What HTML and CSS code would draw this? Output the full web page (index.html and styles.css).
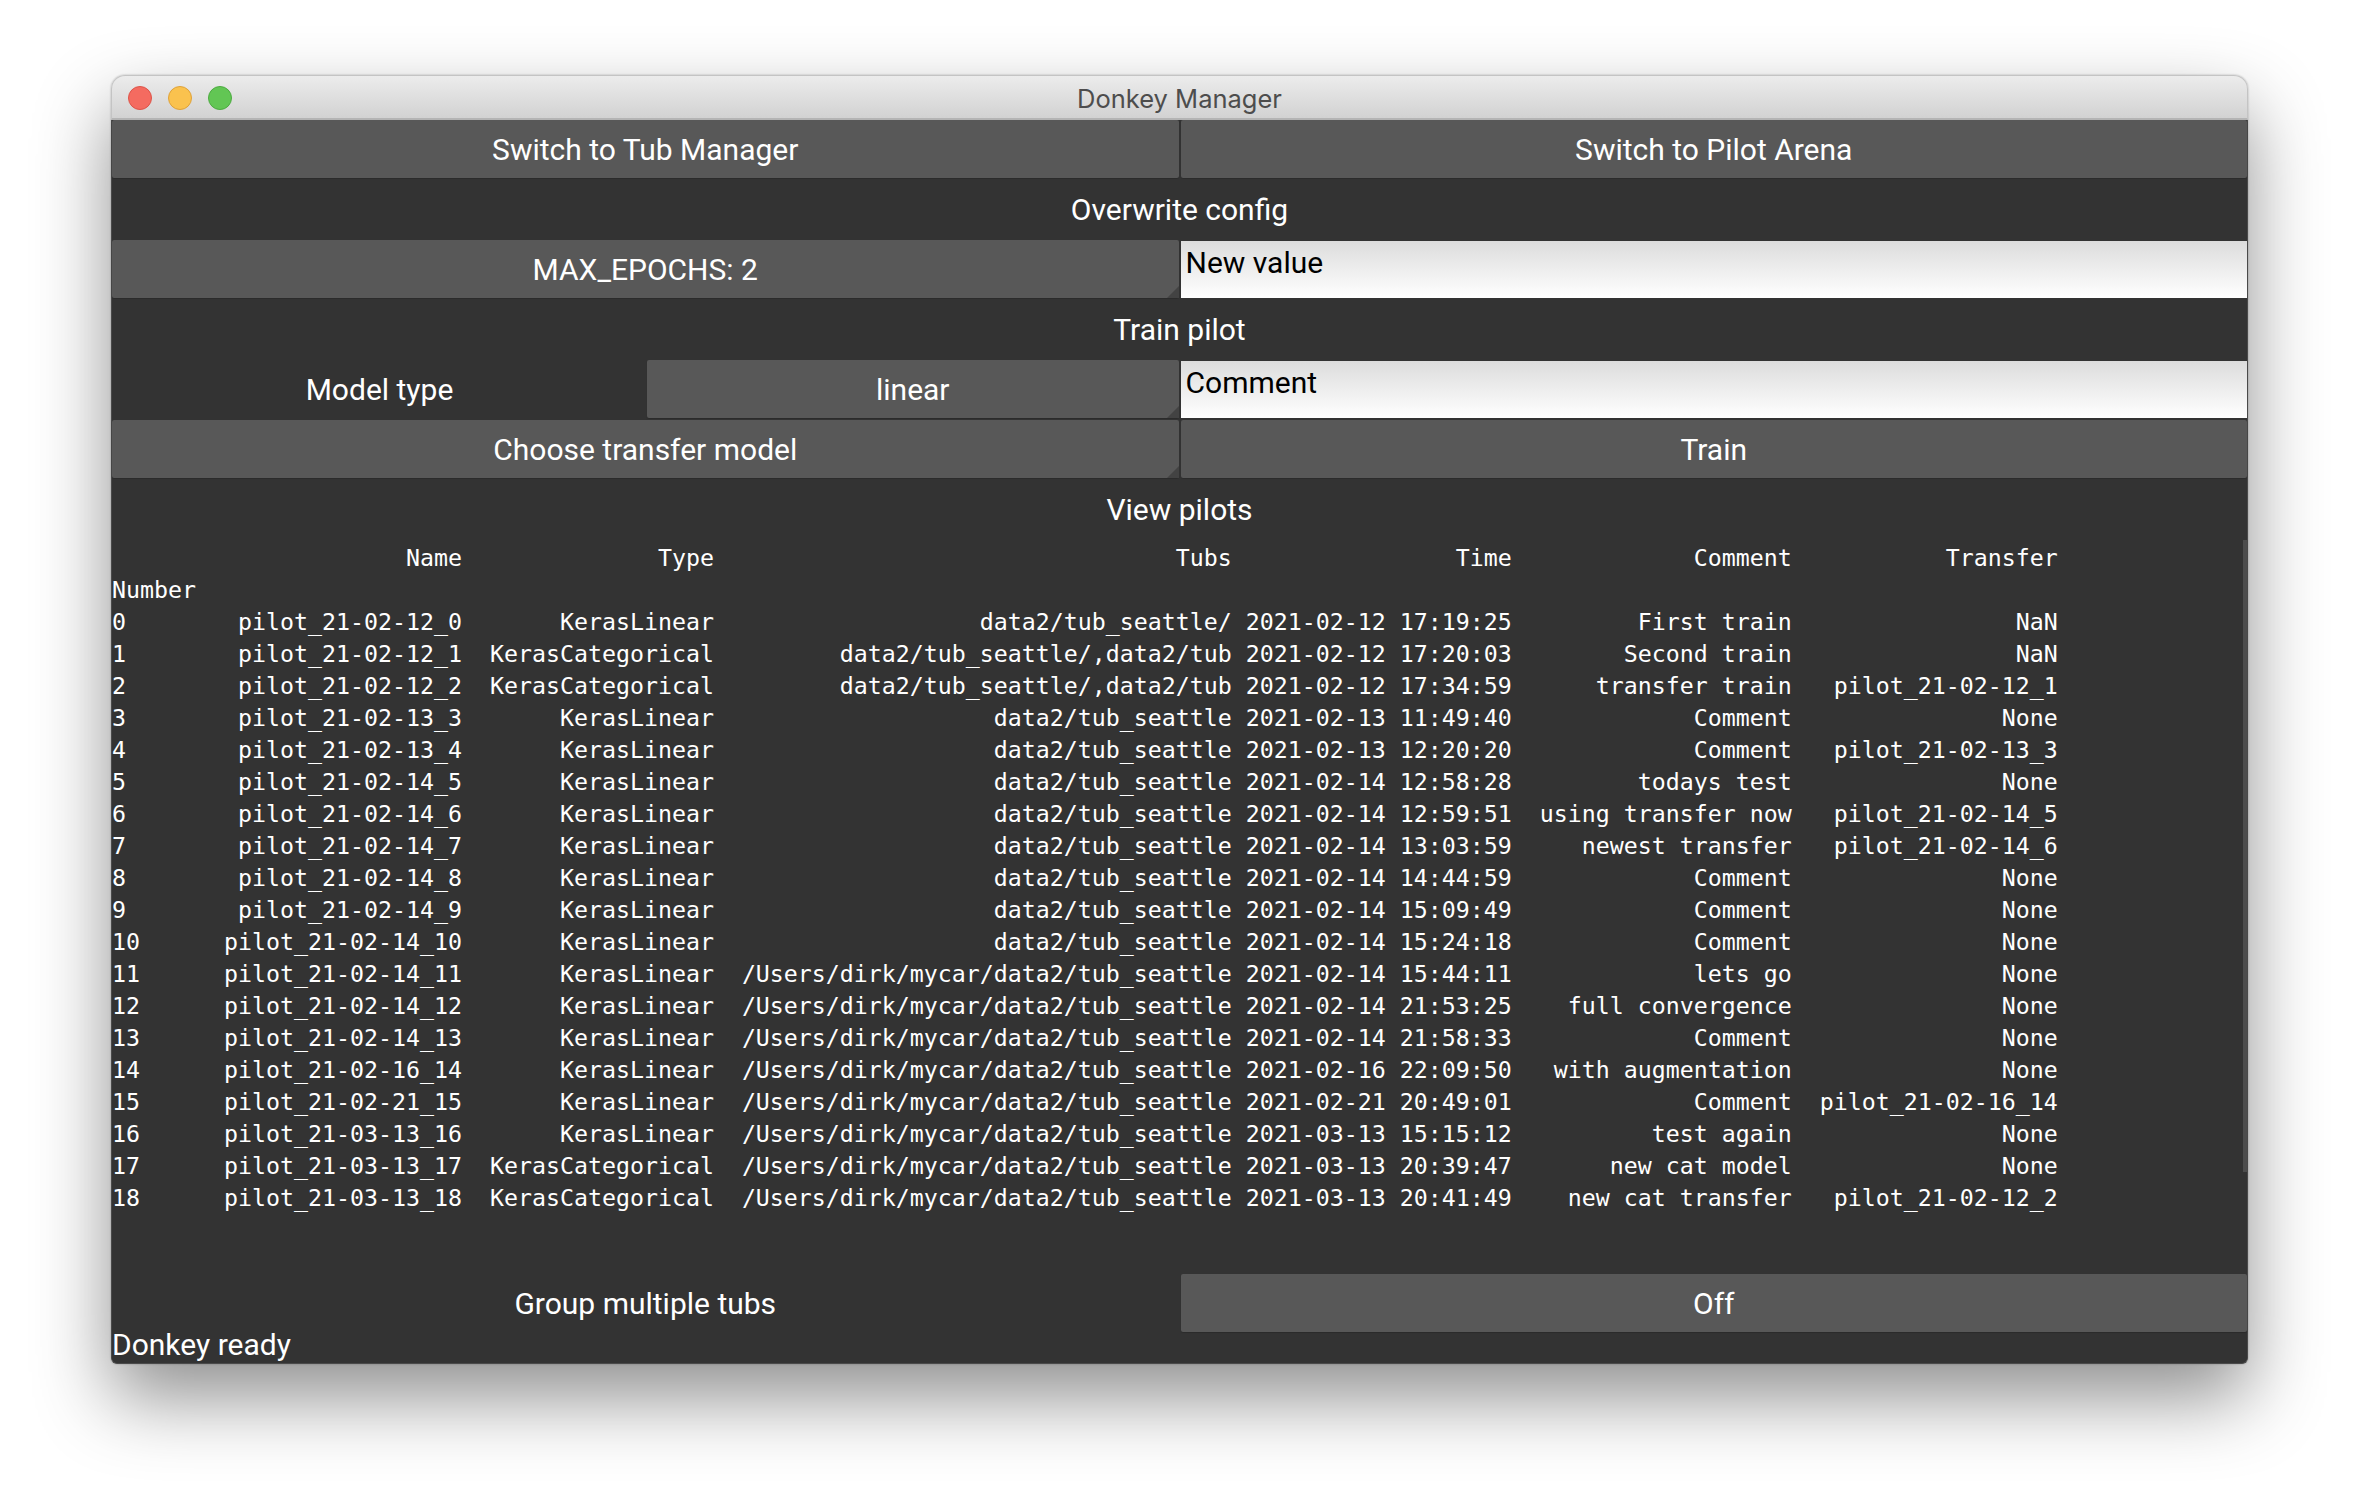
FILE: index.html
```html
<!DOCTYPE html>
<html lang="en">
<head>
  <meta charset="UTF-8">
  <meta name="viewport" content="width=device-width, initial-scale=1.0">
  <title>Donkey Manager</title>
  <link rel="stylesheet" href="styles.css">
</head>
<body>

<div class="window">
  <div class="titlebar">
    <div class="lights">
      <span class="light red"></span>
      <span class="light yellow"></span>
      <span class="light green"></span>
    </div>
    <div class="title">Donkey Manager</div>
  </div>

  <div class="content">
    <div class="row">
      <button class="btn">Switch to Tub Manager</button>
      <button class="btn">Switch to Pilot Arena</button>
    </div>
    <div class="row label">Overwrite config</div>
    <div class="row">
      <button class="btn spinner">MAX_EPOCHS: 2</button>
      <div class="input">New value</div>
    </div>
    <div class="row label">Train pilot</div>
    <div class="row">
      <div class="half">
        <div class="label">Model type</div>
        <button class="btn spinner">linear</button>
      </div>
      <div class="input">Comment</div>
    </div>
    <div class="row">
      <button class="btn spinner">Choose transfer model</button>
      <button class="btn">Train</button>
    </div>
    <div class="row label">View pilots</div>

    <div class="pilots">
      <table class="pilot-table">
        <colgroup>
          <col class="c-num"><col class="c-name"><col class="c-type"><col class="c-tubs"><col class="c-time"><col class="c-comment"><col class="c-transfer">
        </colgroup>
        <tr><td></td><td>Name</td><td>Type</td><td>Tubs</td><td>Time</td><td>Comment</td><td>Transfer</td></tr>
        <tr><td>Number</td><td></td><td></td><td></td><td></td><td></td><td></td></tr>
        <tr><td>0</td><td>pilot_21-02-12_0</td><td>KerasLinear</td><td>data2/tub_seattle/</td><td>2021-02-12 17:19:25</td><td>First train</td><td>NaN</td></tr>
        <tr><td>1</td><td>pilot_21-02-12_1</td><td>KerasCategorical</td><td>data2/tub_seattle/,data2/tub</td><td>2021-02-12 17:20:03</td><td>Second train</td><td>NaN</td></tr>
        <tr><td>2</td><td>pilot_21-02-12_2</td><td>KerasCategorical</td><td>data2/tub_seattle/,data2/tub</td><td>2021-02-12 17:34:59</td><td>transfer train</td><td>pilot_21-02-12_1</td></tr>
        <tr><td>3</td><td>pilot_21-02-13_3</td><td>KerasLinear</td><td>data2/tub_seattle</td><td>2021-02-13 11:49:40</td><td>Comment</td><td>None</td></tr>
        <tr><td>4</td><td>pilot_21-02-13_4</td><td>KerasLinear</td><td>data2/tub_seattle</td><td>2021-02-13 12:20:20</td><td>Comment</td><td>pilot_21-02-13_3</td></tr>
        <tr><td>5</td><td>pilot_21-02-14_5</td><td>KerasLinear</td><td>data2/tub_seattle</td><td>2021-02-14 12:58:28</td><td>todays test</td><td>None</td></tr>
        <tr><td>6</td><td>pilot_21-02-14_6</td><td>KerasLinear</td><td>data2/tub_seattle</td><td>2021-02-14 12:59:51</td><td>using transfer now</td><td>pilot_21-02-14_5</td></tr>
        <tr><td>7</td><td>pilot_21-02-14_7</td><td>KerasLinear</td><td>data2/tub_seattle</td><td>2021-02-14 13:03:59</td><td>newest transfer</td><td>pilot_21-02-14_6</td></tr>
        <tr><td>8</td><td>pilot_21-02-14_8</td><td>KerasLinear</td><td>data2/tub_seattle</td><td>2021-02-14 14:44:59</td><td>Comment</td><td>None</td></tr>
        <tr><td>9</td><td>pilot_21-02-14_9</td><td>KerasLinear</td><td>data2/tub_seattle</td><td>2021-02-14 15:09:49</td><td>Comment</td><td>None</td></tr>
        <tr><td>10</td><td>pilot_21-02-14_10</td><td>KerasLinear</td><td>data2/tub_seattle</td><td>2021-02-14 15:24:18</td><td>Comment</td><td>None</td></tr>
        <tr><td>11</td><td>pilot_21-02-14_11</td><td>KerasLinear</td><td>/Users/dirk/mycar/data2/tub_seattle</td><td>2021-02-14 15:44:11</td><td>lets go</td><td>None</td></tr>
        <tr><td>12</td><td>pilot_21-02-14_12</td><td>KerasLinear</td><td>/Users/dirk/mycar/data2/tub_seattle</td><td>2021-02-14 21:53:25</td><td>full convergence</td><td>None</td></tr>
        <tr><td>13</td><td>pilot_21-02-14_13</td><td>KerasLinear</td><td>/Users/dirk/mycar/data2/tub_seattle</td><td>2021-02-14 21:58:33</td><td>Comment</td><td>None</td></tr>
        <tr><td>14</td><td>pilot_21-02-16_14</td><td>KerasLinear</td><td>/Users/dirk/mycar/data2/tub_seattle</td><td>2021-02-16 22:09:50</td><td>with augmentation</td><td>None</td></tr>
        <tr><td>15</td><td>pilot_21-02-21_15</td><td>KerasLinear</td><td>/Users/dirk/mycar/data2/tub_seattle</td><td>2021-02-21 20:49:01</td><td>Comment</td><td>pilot_21-02-16_14</td></tr>
        <tr><td>16</td><td>pilot_21-03-13_16</td><td>KerasLinear</td><td>/Users/dirk/mycar/data2/tub_seattle</td><td>2021-03-13 15:15:12</td><td>test again</td><td>None</td></tr>
        <tr><td>17</td><td>pilot_21-03-13_17</td><td>KerasCategorical</td><td>/Users/dirk/mycar/data2/tub_seattle</td><td>2021-03-13 20:39:47</td><td>new cat model</td><td>None</td></tr>
        <tr><td>18</td><td>pilot_21-03-13_18</td><td>KerasCategorical</td><td>/Users/dirk/mycar/data2/tub_seattle</td><td>2021-03-13 20:41:49</td><td>new cat transfer</td><td>pilot_21-02-12_2</td></tr>
      </table>
      <div class="scrollbar"></div>
    </div>

    <div class="row">
      <div class="label">Group multiple tubs</div>
      <button class="btn">Off</button>
    </div>
    <div class="status">Donkey ready</div>
  </div>
</div>

</body>
</html>
```

FILE: styles.css
```css
* {
  box-sizing: border-box;
}
body {
  margin: 0;
  height: 1512px;
  padding: 75px 112px 0 111px;
  background-color: #fff;
  font-family: Roboto, sans-serif;
  overflow: hidden;
}
.window {
  height: 1289px;
  border-radius: 14px 14px 6px 6px;
  box-shadow: 0 34px 76px rgba(0, 0, 0, 0.44), 0 0 2px rgba(0, 0, 0, 0.3);
  display: flex;
  flex-direction: column;
}
.titlebar {
  height: 45px;
  flex: none;
  padding-top: 3px;
  display: flex;
  align-items: center;
  justify-content: center;
  position: relative;
  border: 1px solid #c4c4c4;
  border-bottom: 2px solid #b4b4b4;
  border-radius: 14px 14px 0 0;
  background: linear-gradient(#ececec, #d2d2d2);
}
.lights {
  position: absolute;
  left: 16px;
  top: 10px;
  display: flex;
  gap: 16px;
}
.light {
  width: 24px;
  height: 24px;
  border-radius: 50%;
}
.red {
  background-color: #f46b60;
  border: 1px solid #dd5449;
}
.yellow {
  background-color: #fac24e;
  border: 1px solid #dfa23a;
}
.green {
  background-color: #62c654;
  border: 1px solid #4dab41;
}
.title {
  font-family: Inter, sans-serif;
  font-size: 25.5px;
  color: #4d4d4d;
}
.content {
  flex: 1;
  display: flex;
  flex-direction: column;
  gap: 2px;
  background-color: #333;
  border-radius: 0 0 6px 6px;
  border-right: 1px solid #4a4a4a;
  border-left: 1px solid #4a4a4a;
  border-bottom: 1px solid #4a4a4a;
  color: #fff;
  font-size: 30px;
}
.row {
  height: 58px;
  flex: none;
  display: grid;
  grid-template-columns: 1fr 1fr;
  gap: 2px;
  align-items: stretch;
}
.half {
  display: grid;
  grid-template-columns: 535px 1fr;
}
.row.label {
  display: flex;
}
.label {
  display: flex;
  align-items: center;
  justify-content: center;
}
.btn {
  position: relative;
  padding: 0;
  border: none;
  border-radius: 2px;
  background-color: #585858;
  box-shadow: 0 1px 1px #2b2b2b;
  color: #fff;
  font: inherit;
}
.spinner::after {
  content: "";
  position: absolute;
  right: 0;
  bottom: 0;
  width: 0;
  height: 0;
  border-left: 12px solid transparent;
  border-bottom: 12px solid #434343;
}
.input {
  margin-top: 1px;
  padding: 5px 5px 0;
  line-height: 34px;
  color: #000;
  background: linear-gradient(#dcdcdc, #fff);
}
.pilots {
  height: 672px;
  flex: none;
  margin-bottom: 60px;
  padding-top: 2px;
  overflow: hidden;
  position: relative;
}
.pilot-table {
  width: 139ch;
  table-layout: fixed;
  border-collapse: collapse;
  font-family: "DejaVu Sans Mono", monospace;
  font-size: 23.25px;
  white-space: pre;
}
.pilot-table td {
  height: 32px;
  padding: 0;
  line-height: 32px;
  text-align: right;
}
.pilot-table td:first-child {
  text-align: left;
}
.c-num { width: 6ch; }
.c-name { width: 19ch; }
.c-type { width: 18ch; }
.c-tubs { width: 37ch; }
.c-time { width: 20ch; }
.c-comment { width: 20ch; }
.c-transfer { width: 19ch; }
.scrollbar {
  position: absolute;
  right: 0;
  top: 0;
  width: 4px;
  height: 632px;
  background-color: #4d4d4d;
}
.status {
  line-height: 22px;
}
```
